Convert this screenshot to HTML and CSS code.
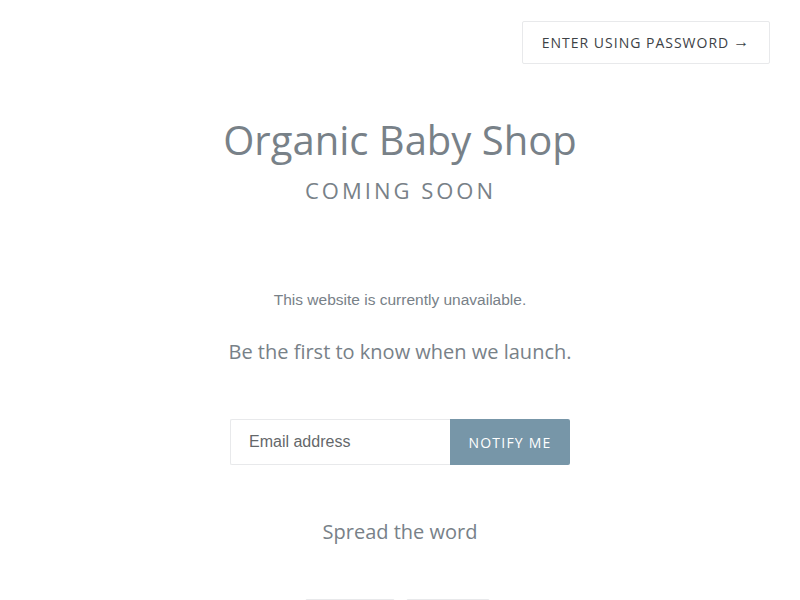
FILE: index.html
```html
<!DOCTYPE html>
<html>
<head>
<meta charset="utf-8">
<link rel="stylesheet" href="styles.css">
</head>
<body>
<header class="top">
  <a class="pw-btn" href="#">Enter using password <span class="arrow">&rarr;</span></a>
</header>
<main class="main">
  <h1 class="title">Organic Baby Shop</h1>
  <div class="soon">Coming Soon</div>
  <p class="unavail">This website is currently unavailable.</p>
  <p class="launch">Be the first to know when we launch.</p>
  <form class="form">
    <input class="email" type="email" placeholder="Email address">
    <button class="notify" type="button">Notify me</button>
  </form>
  <h2 class="spread">Spread the word</h2>
  <div class="social">
    <span class="share"></span>
    <span class="share share2"></span>
  </div>
</main>
</body>
</html>
```
FILE: styles.css
```css
html, body { margin: 0; padding: 0; background: #fff; }
body { font-family: "Open Sans", sans-serif; color: #788188; height: 600px; overflow: hidden; }
.top { display: flex; justify-content: flex-end; padding: 21px 30px 0 0; }
.pw-btn {
  display: flex; align-items: center; justify-content: center;
  width: 246px; height: 41px; border: 1px solid #e8e9eb; border-radius: 2px;
  font-size: 14px; letter-spacing: 1px; text-transform: uppercase; color: #3d4246;
  text-decoration: none; box-sizing: content-box;
}
.arrow { display: inline-block; margin: 0 0 3px 4px; font-size: 16px; line-height: 1; }
.main { display: flex; flex-direction: column; align-items: center; }
.title { margin: 48px 0 0; font-weight: 400; font-size: 40px; line-height: 56px; color: #788188; }
.soon { margin-top: 7px; font-size: 22px; letter-spacing: 3px; margin-right: -1px; text-transform: uppercase; line-height: 30px; }
.unavail { margin: 83px 0 0; font-family: "Liberation Sans", Arial, sans-serif; font-size: 15.5px; line-height: 24px; }
.launch { margin: 25px 0 0; font-size: 20px; line-height: 30px; }
.form { display: flex; margin-top: 52px; }
.email {
  width: 220px; height: 46px; box-sizing: border-box; border: 1px solid #e8e9eb; border-right: 0;
  border-radius: 2px 0 0 2px; padding: 0 18px; font-family: "Liberation Sans", Arial, sans-serif; font-size: 16px; color: #3d4246; outline: none;
}
.email::placeholder { color: #3d4246; opacity: 0.8; }
.notify {
  width: 120px; height: 46px; border: 0; background: #7796a8; color: #fff; border-radius: 0 2px 2px 0;
  font-family: "Open Sans", sans-serif; font-size: 14px; letter-spacing: 1.2px; text-transform: uppercase;
}
.spread { margin: 52px 0 0; font-weight: 400; font-size: 20px; line-height: 30px; }
.social { display: flex; gap: 11px; margin-top: 52px; margin-left: -5px; }
.share { display: block; width: 88px; height: 30px; border: 1px solid #e8e9eb; border-radius: 2px; }
.share2 { width: 82px; }
```
